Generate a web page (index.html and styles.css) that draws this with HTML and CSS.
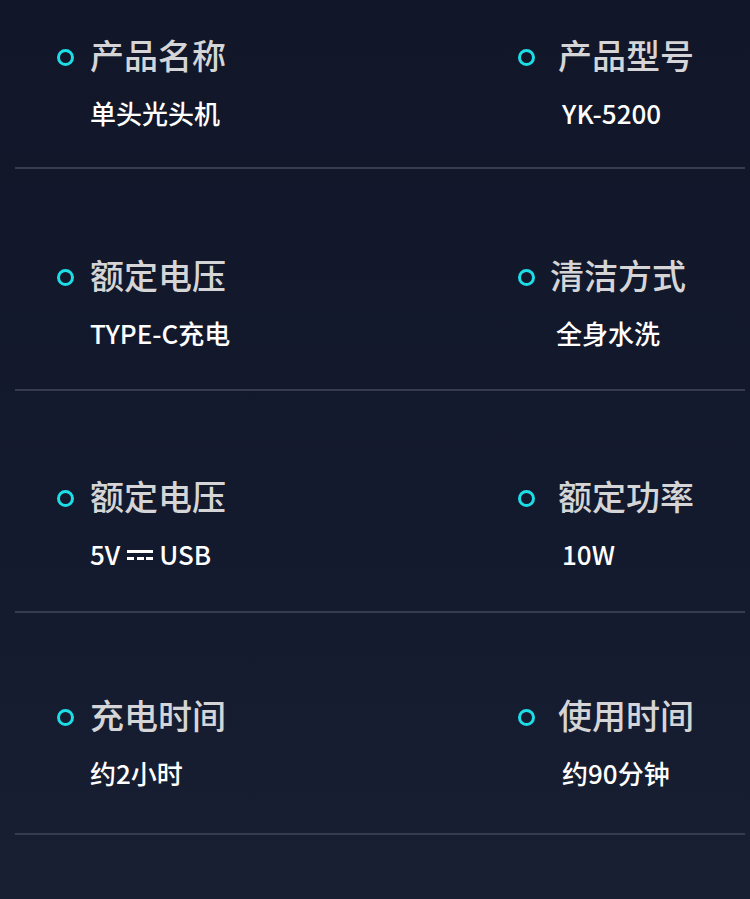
FILE: index.html
```html
<!DOCTYPE html>
<html lang="zh">
<head>
<meta charset="utf-8">
<link rel="stylesheet" href="styles.css">
</head>
<body>
<div class="page">
  <div class="row">
    <div class="item">
      <div class="head"><span class="dot"></span><span class="title">产品名称</span></div>
      <div class="value">单头光头机</div>
    </div>
    <div class="item right">
      <div class="head"><span class="dot"></span><span class="title">产品型号</span></div>
      <div class="value">YK-5200</div>
    </div>
  </div>
  <div class="row">
    <div class="item">
      <div class="head"><span class="dot"></span><span class="title">额定电压</span></div>
      <div class="value">TYPE-C充电</div>
    </div>
    <div class="item right tight">
      <div class="head"><span class="dot"></span><span class="title">清洁方式</span></div>
      <div class="value">全身水洗</div>
    </div>
  </div>
  <div class="row">
    <div class="item">
      <div class="head"><span class="dot"></span><span class="title">额定电压</span></div>
      <div class="value">5V<span class="dc"><span class="dc-solid"></span><span class="dc-dash"><i></i><i></i><i></i></span></span>USB</div>
    </div>
    <div class="item right">
      <div class="head"><span class="dot"></span><span class="title">额定功率</span></div>
      <div class="value">10W</div>
    </div>
  </div>
  <div class="row">
    <div class="item">
      <div class="head"><span class="dot"></span><span class="title">充电时间</span></div>
      <div class="value">约2小时</div>
    </div>
    <div class="item right">
      <div class="head"><span class="dot"></span><span class="title">使用时间</span></div>
      <div class="value">约90分钟</div>
    </div>
  </div>
</div>
</body>
</html>
```
FILE: styles.css
```css
html, body {
  margin: 0;
  padding: 0;
}
body {
  width: 750px;
  height: 899px;
  overflow: hidden;
  background: linear-gradient(180deg, #111729 0%, #141a2d 60%, #181f32 100%);
  font-family: "Noto Sans CJK SC", "Noto Sans", sans-serif;
}
.page {
  display: flex;
  flex-direction: column;
}
.row {
  display: grid;
  grid-template-columns: 461px 1fr;
  height: 222px;
  box-sizing: border-box;
  padding: 87px 0 0 42px;
  margin: 0 5px 0 15px;
  border-bottom: 2px solid #363c4d;
}
.row:nth-child(1) {
  height: 169px;
  padding-top: 37px;
}
.row:nth-child(2) {
  padding-top: 88px;
}
.row:nth-child(4) {
  padding-top: 84px;
}
.item {
  display: flex;
  flex-direction: column;
}
.head {
  display: flex;
  align-items: center;
  height: 40px;
}
.dot {
  width: 17px;
  height: 17px;
  box-sizing: border-box;
  border: 3px solid #1ddde6;
  border-radius: 50%;
  flex: none;
}
.title {
  margin-left: 16px;
  padding-bottom: 5px;
  font-size: 34px;
  line-height: 40px;
  font-weight: 500;
  color: #d5d5d7;
}
.right .title {
  margin-left: 23px;
}
.right.tight .title {
  margin-left: 15px;
}
.value {
  margin-top: 21px;
  padding-left: 33px;
  font-size: 26px;
  line-height: 30px;
  font-weight: 500;
  color: #ffffff;
  display: flex;
  align-items: center;
}
.right .value {
  padding-left: 44px;
}
.right.tight .value {
  padding-left: 38px;
}
.dc {
  display: inline-flex;
  flex-direction: column;
  gap: 4px;
  width: 26px;
  margin: 2px 6px 0 7px;
}
.dc-solid {
  height: 3px;
  background: #ffffff;
}
.dc-dash {
  display: flex;
  justify-content: space-between;
}
.dc-dash i {
  width: 7px;
  height: 3px;
  background: #ffffff;
}
```
